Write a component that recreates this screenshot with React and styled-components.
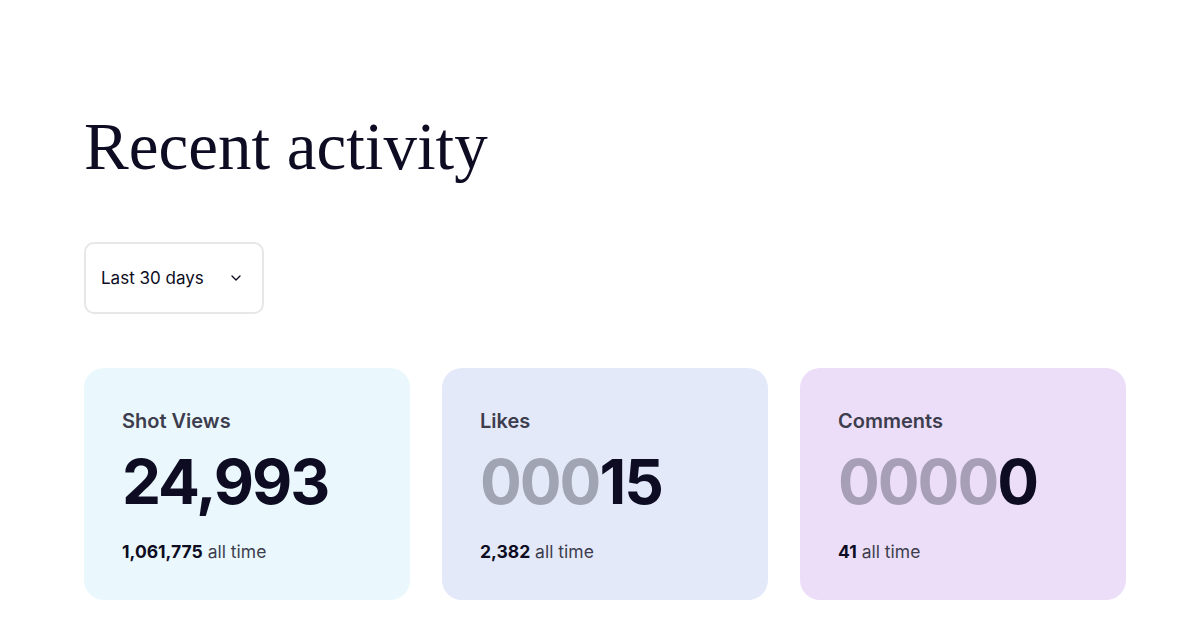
import React from 'react';
import styled, { createGlobalStyle } from 'styled-components';
import { ChevronDown } from 'lucide-react';

const GlobalStyle = createGlobalStyle`
  * { box-sizing: border-box; }
  body {
    margin: 0;
    background: #ffffff;
    font-family: Inter, "Liberation Sans", sans-serif;
    color: #0d0c22;
  }
`;

const Page = styled.div`
  padding: 113px 73px 40px 84px;
`;

const Title = styled.h1`
  font-family: "Liberation Serif", serif;
  font-weight: 400;
  font-size: 67px;
  line-height: 1;
  margin: 0 0 62px;
  color: #0d0c22;
`;

const Select = styled.button`
  display: flex;
  align-items: center;
  justify-content: space-between;
  width: 180px;
  height: 72px;
  padding: 0 18px 0 15px;
  background: #fff;
  border: 2px solid #e7e7e9;
  border-radius: 10px;
  font-family: Inter, "Liberation Sans", sans-serif;
  font-size: 17px;
  color: #0d0c22;
  margin-bottom: 54px;
  cursor: pointer;
`;

const Cards = styled.div`
  display: grid;
  grid-template-columns: repeat(3, 326px);
  gap: 32px;
`;

const Card = styled.div`
  height: 232px;
  border-radius: 20px;
  background: ${p => p.$bg};
  padding: 39px 38px 0;
`;

const Label = styled.div`
  font-size: 20px;
  font-weight: 600;
  color: #3d3d4e;
  line-height: 28px;
  margin-bottom: 9px;
`;

const Big = styled.div`
  font-size: 62px;
  font-weight: 700;
  line-height: 76px;
  letter-spacing: -2px;
  color: #0d0c22;
  margin-bottom: 20px;
`;

const Dim = styled.span`
  color: ${p => p.$color};
`;

const Sub = styled.div`
  font-size: 17.5px;
  color: #3d3d4e;
  line-height: 24px;

  strong {
    font-weight: 700;
    color: #0d0c22;
  }
`;

const stats = [
  { label: 'Shot Views', dim: '', value: '24,993', total: '1,061,775', bg: '#eaf8fd', dimColor: '#9ea3b0' },
  { label: 'Likes', dim: '000', value: '15', total: '2,382', bg: '#e4e9f9', dimColor: '#a0a4b3' },
  { label: 'Comments', dim: '0000', value: '0', total: '41', bg: '#ecdef8', dimColor: '#a79fb5' },
];

export default function App() {
  return (
    <>
      <GlobalStyle />
      <Page>
        <Title>Recent activity</Title>
        <Select>
          Last 30 days
          <ChevronDown size={16} strokeWidth={2} />
        </Select>
        <Cards>
          {stats.map(s => (
            <Card key={s.label} $bg={s.bg}>
              <Label>{s.label}</Label>
              <Big>
                {s.dim && <Dim $color={s.dimColor}>{s.dim}</Dim>}
                {s.value}
              </Big>
              <Sub>
                <strong>{s.total}</strong> all time
              </Sub>
            </Card>
          ))}
        </Cards>
      </Page>
    </>
  );
}
